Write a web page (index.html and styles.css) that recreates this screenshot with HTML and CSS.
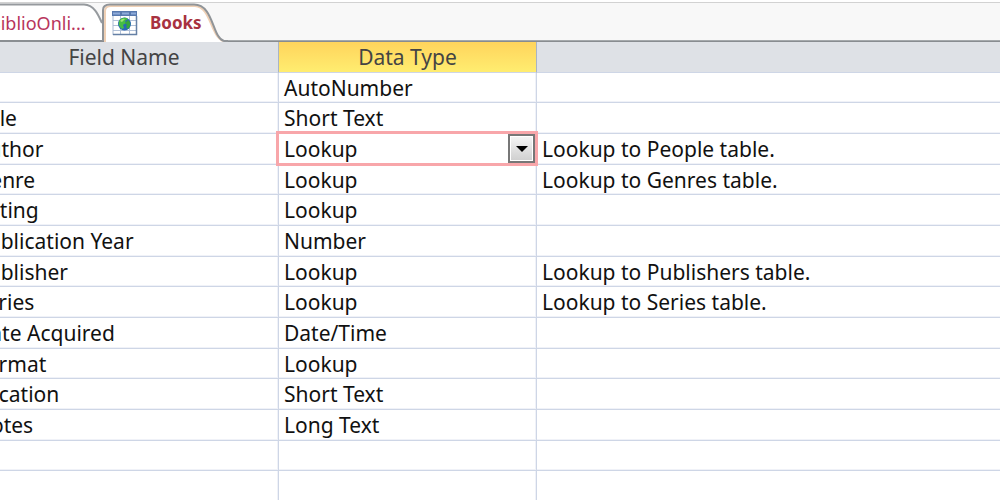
FILE: index.html
```html
<!DOCTYPE html>
<html lang="en">
<head>
<meta charset="utf-8">
<title>Books - Design View</title>
<link rel="stylesheet" href="styles.css">
</head>
<body>
<nav class="tabs">
  <button class="tab tab-back" type="button">
    <svg class="tab-shape" width="138" height="42" viewBox="0 0 138 42" aria-hidden="true">
      <path d="M0 4.500H120C130 5 134 14 138 23V40H0Z" fill="#fff"/>
      <path d="M0 4.500H120C130 5 134 14 138 23" fill="none" stroke="#969a9e" stroke-width="2"/>
      <path d="M0 41H138" stroke="#8a8e92" stroke-width="2"/>
    </svg>
    <span class="tab-label">BiblioOnli...</span>
  </button>
  <button class="tab tab-active" type="button">
    <svg class="tab-shape" width="126" height="42" viewBox="0 0 126 42" aria-hidden="true">
      <path d="M2 42V10Q2 5 8 5H93C112 5 110 38 124 41V42Z" fill="#fff"/>
      <path d="M3 42V11Q3 6 9 6H93C109 7 108 35 121 41" fill="none" stroke="#efd0b5" stroke-width="2"/>
      <path d="M1 41V10Q1 4.500 8 4.500H92C112 4.500 110 38 122 41H126" fill="none" stroke="#909498" stroke-width="2"/>
    </svg>
    <svg class="tab-icon" width="26" height="25" viewBox="0 0 26 25" aria-hidden="true">
      <rect x="0" y="0" width="25" height="24" fill="#fff"/>
      <path d="M1 9.500H25M1 14.500H25M1 19.500H25M8.500 5V24M17.500 5V24" stroke="#b1c1d8"/>
      <path d="M1 5V24" stroke="#a9bad3"/>
      <path d="M1 23.500H24.500V5" fill="none" stroke="#6580a5" stroke-width="1.500"/>
      <rect x="0" y="0" width="25" height="5" fill="#5879ae"/>
      <path d="M1 2.500H8M10 2.500H17M19 2.500H24" stroke="#8eabda" stroke-width="2"/>
      <circle cx="12.500" cy="13" r="6.500" fill="#2869b6"/>
      <path d="M7 10C9 6 14 6 16 8L13 10L14 12L11 14L12 17L10 18C7 16 6 13 7 10Z" fill="#45bd45"/>
      <path d="M16 9C19 11 19 15 16 18L14 16L15 14L13 12Z" fill="#35a63d"/>
      <path d="M8 10Q10 7 13 8L10 11Z" fill="#9be472"/>
    </svg>
    <span class="tab-label">Books</span>
  </button>
</nav>
<main class="designer">
  <table class="fields">
    <colgroup><col class="col-name"><col class="col-type"><col></colgroup>
    <thead>
      <tr><th scope="col">Field Name</th><th scope="col" class="selected">Data Type</th><th scope="col"></th></tr>
    </thead>
    <tbody>
      <tr><td></td><td>AutoNumber</td><td></td></tr>
      <tr><td>Title</td><td>Short Text</td><td></td></tr>
      <tr><td>Author</td><td class="editing"><div class="editor"><span>Lookup</span><button class="drop" type="button" aria-label="Choose data type"><svg width="12" height="6" viewBox="0 0 12 6" aria-hidden="true"><path d="M0 0H12L6 6Z"/></svg></button></div></td><td>Lookup to People table.</td></tr>
      <tr><td>Genre</td><td>Lookup</td><td>Lookup to Genres table.</td></tr>
      <tr><td>Rating</td><td>Lookup</td><td></td></tr>
      <tr><td>Publication Year</td><td>Number</td><td></td></tr>
      <tr><td>Publisher</td><td>Lookup</td><td>Lookup to Publishers table.</td></tr>
      <tr><td>Series</td><td>Lookup</td><td>Lookup to Series table.</td></tr>
      <tr><td>Date Acquired</td><td>Date/Time</td><td></td></tr>
      <tr><td>Format</td><td>Lookup</td><td></td></tr>
      <tr><td>Location</td><td>Short Text</td><td></td></tr>
      <tr><td>Notes</td><td>Long Text</td><td></td></tr>
      <tr><td></td><td></td><td></td></tr>
      <tr><td></td><td></td><td></td></tr>
    </tbody>
  </table>
</main>
</body>
</html>
```
FILE: styles.css
```css
* { box-sizing: border-box; }
html { overflow: hidden; }
body {
  margin: 0;
  overflow: hidden;
  background: #fff;
  color: #111;
  font-family: "Noto Sans", "Open Sans", sans-serif;
  font-size: 21px;
}
.tabs {
  display: flex;
  height: 42px;
  margin-left: -36px;
  background: linear-gradient(#fff 2px, #d2d2d2 2px, #d2d2d2 3px, #f8f8f8 3px, #f8f8f8 40px, #a5a9ac 40px, #a5a9ac 41px, #888c90 41px);
}
.tab {
  position: relative;
  display: flex;
  align-items: center;
  height: 42px;
  padding: 4px 0 0;
  border: 0;
  background: none;
  color: #a83240;
  font: 17px/24px "Noto Sans", "Open Sans", sans-serif;
}
.tab-back { width: 138px; padding-left: 25px; color: #b8345c; font-size: 18px; }
.tab-active { width: 126px; gap: 12px; padding-left: 10px; font-weight: 700; }
.tab-shape { position: absolute; top: 0; left: 0; }
.tab-icon, .tab-label { position: relative; }
.designer { margin-left: -30px; }
.fields { width: 100%; table-layout: fixed; border-collapse: separate; border-spacing: 0; }
.col-name { width: 309px; }
.col-type { width: 258px; }
th, td {
  height: 31px;
  padding: 0 5px;
  border-right: 1px solid #ced6e6;
  border-bottom: 1px solid #ced6e6;
  line-height: 28px;
  text-align: left;
  white-space: nowrap;
}
td { box-shadow: inset -1px -1px #f0f2f8; }
th {
  background: #dee1e6;
  border-right-color: #a9b4c5;
  color: #444;
  font-weight: 400;
  text-align: center;
}
th:last-child, td:last-child { border-right: 0; }
td:last-child { box-shadow: inset 0 -1px #f0f2f8; }
th.selected { background: linear-gradient(#ffd45c, #ffed70); }
tbody tr:nth-child(3n + 1) td { height: 30px; }
td.editing { position: relative; }
.editor {
  position: absolute;
  inset: -3px -2px -2px -3px;
  display: flex;
  align-items: center;
  justify-content: space-between;
  padding-left: 5px;
  border: 3px solid #f8a6aa;
  background: #fff;
}
.drop {
  display: flex;
  align-items: center;
  justify-content: center;
  width: 27px;
  height: 29px;
  padding: 0;
  border: 2px solid #777;
  background: linear-gradient(#f5f5f5, #cfcfcf);
  box-shadow: inset 0 0 0 1px #fff;
}
```
